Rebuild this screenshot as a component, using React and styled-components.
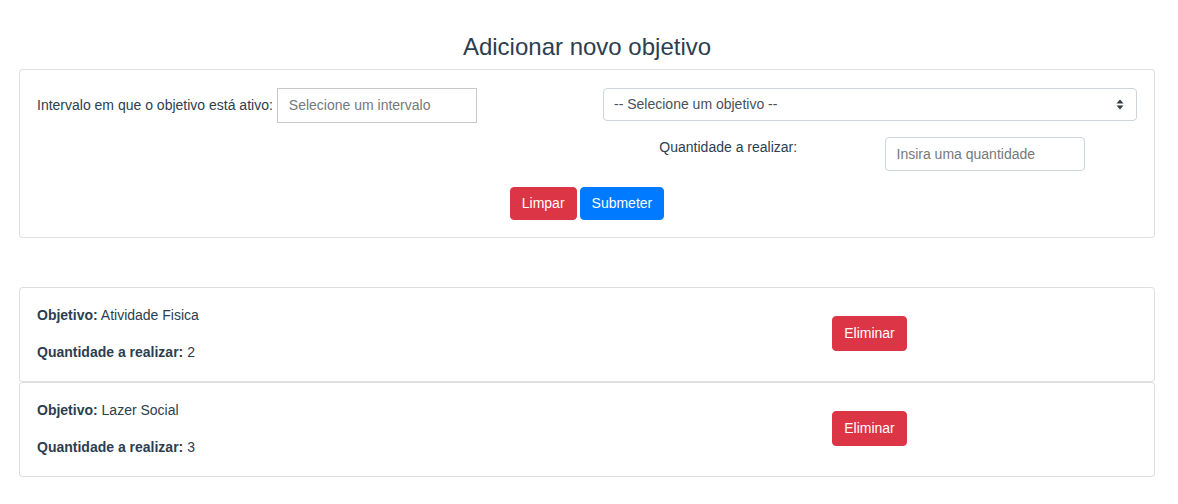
import React from 'react'
import styled, { createGlobalStyle } from 'styled-components'

const GlobalStyle = createGlobalStyle`
  body {
    margin: 0;
    background: #fff;
    font-family: "Liberation Sans", Arial, sans-serif;
    font-size: 14px;
    line-height: 1.5;
    color: #2c3e50;
  }
  * { box-sizing: border-box; }
`

const Page = styled.div`
  padding: 0 23px 0 19px;
`

const Title = styled.h4`
  margin: 33px 0 7px;
  font-size: 24px;
  font-weight: 400;
  line-height: 1.2;
  text-align: center;
  color: #2c3e50;
`

const Card = styled.div`
  border: 1px solid rgba(0, 0, 0, 0.125);
  border-radius: 4px;
  background: #fff;
  padding: ${(p) => p.$pad || '17px'};
`

const Spacer = styled.div`
  height: 49px;
`

const Grid = styled.div`
  display: grid;
  grid-template-columns: 1fr 1fr;
  column-gap: 30px;
  align-items: ${(p) => p.$align || 'start'};
`

const InlineField = styled.div`
  display: flex;
  align-items: center;
`

const Label = styled.label`
  margin-right: 4px;
`

const Input = styled.input`
  width: 200px;
  height: ${(p) => p.$h || 35}px;
  padding: 0 11px;
  font: inherit;
  font-size: 14px;
  color: #495057;
  border: 1px solid ${(p) => (p.$square ? '#c8c8c8' : '#ced4da')};
  border-radius: ${(p) => (p.$square ? 0 : 4)}px;
  outline: none;

  &::placeholder {
    color: #75797d;
  }
`

const SelectBox = styled.div`
  height: 33px;
  margin-left: 1px;
  border: 1px solid #ced4da;
  border-radius: 4px;
  display: flex;
  align-items: center;
  justify-content: space-between;
  padding: 0 12px 0 10px;
  color: #495057;
`

const SubGrid = styled.div`
  display: grid;
  grid-template-columns: 1fr 1fr;
  column-gap: 30px;
  margin-top: 16px;
`

const SubLabel = styled.div`
  text-align: center;
  line-height: 21px;
`

const Actions = styled.div`
  display: flex;
  justify-content: center;
  gap: 3px;
  margin-top: 16px;
`

const Button = styled.button`
  font: inherit;
  font-size: 14px;
  line-height: 21px;
  padding: ${(p) => (p.$tall ? '6px 11px' : '5px 11px 5px')};
  border: 1px solid ${(p) => (p.$variant === 'primary' ? '#007bff' : '#dc3545')};
  background: ${(p) => (p.$variant === 'primary' ? '#007bff' : '#dc3545')};
  color: #fff;
  border-radius: 4px;
  cursor: pointer;
`

const Centered = styled.div`
  display: flex;
  justify-content: center;
`

const Line = styled.p`
  margin: 0 0 16px;
  line-height: 21px;

  &:last-child {
    margin-bottom: 0;
  }

  b {
    font-weight: 700;
  }
`

const Arrows = () => (
  <svg width="8" height="11" viewBox="0 0 8 11">
    <path d="M4 0.5 L7.5 4.5 H0.5 Z M4 10.5 L0.5 6.5 H7.5 Z" fill="#343a40" />
  </svg>
)

const objetivos = [
  { nome: 'Atividade Fisica', quantidade: 2 },
  { nome: 'Lazer Social', quantidade: 3 },
]

export default function App() {
  return (
    <>
      <GlobalStyle />
      <Page>
        <Title>Adicionar novo objetivo</Title>
        <Card $pad="18px 17px 17px">
          <Grid>
            <InlineField>
              <Label>Intervalo em que o objetivo está ativo:</Label>
              <Input $square placeholder="Selecione um intervalo" />
            </InlineField>
            <div>
              <SelectBox>
                <span>-- Selecione um objetivo --</span>
                <Arrows />
              </SelectBox>
              <SubGrid>
                <SubLabel>Quantidade a realizar:</SubLabel>
                <Input $h={34} placeholder="Insira uma quantidade" />
              </SubGrid>
            </div>
          </Grid>
          <Actions>
            <Button>Limpar</Button>
            <Button $variant="primary">Submeter</Button>
          </Actions>
        </Card>
        <Spacer />
        {objetivos.map((o) => (
          <Card key={o.nome} $pad="17px 17px 18px">
            <Grid $align="center">
              <div>
                <Line>
                  <b>Objetivo:</b> {o.nome}
                </Line>
                <Line>
                  <b>Quantidade a realizar:</b> {o.quantidade}
                </Line>
              </div>
              <Centered>
                <Button $tall>Eliminar</Button>
              </Centered>
            </Grid>
          </Card>
        ))}
      </Page>
    </>
  )
}
